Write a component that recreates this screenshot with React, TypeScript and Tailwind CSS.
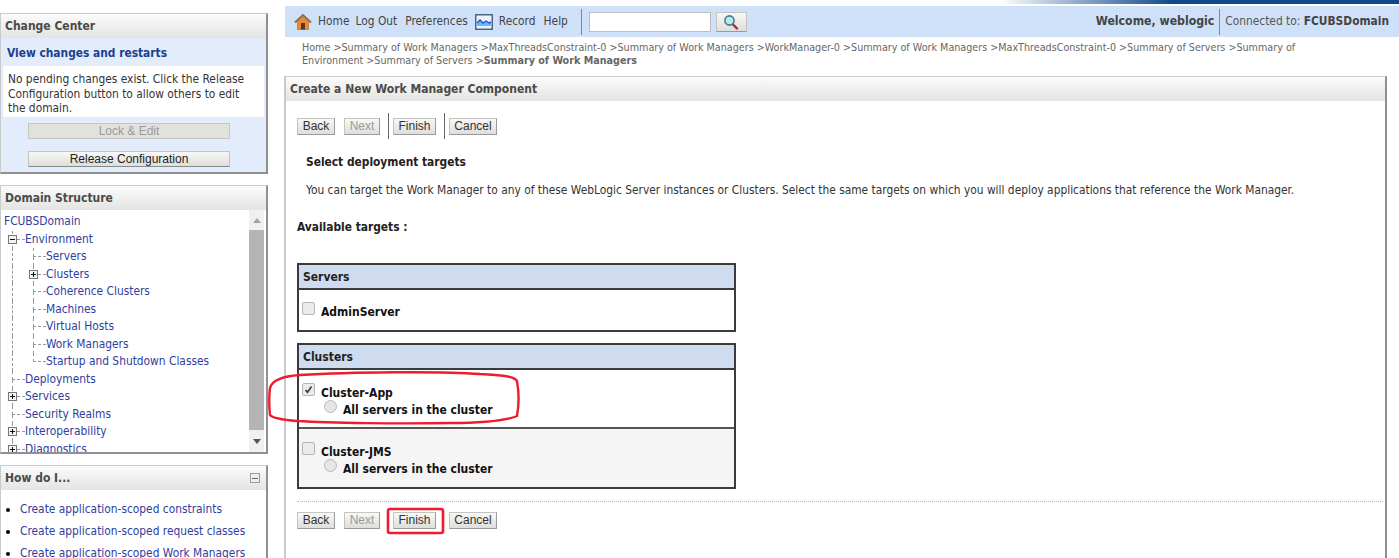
import type { ReactNode } from "react";

const bodyFont = "font-['DejaVu_Sans_Condensed','DejaVu_Sans',sans-serif]";

const treeRows = [
  { label: "Environment", depth: 1, box: "minus" },
  { label: "Servers", depth: 2 },
  { label: "Clusters", depth: 2, box: "plus" },
  { label: "Coherence Clusters", depth: 2 },
  { label: "Machines", depth: 2 },
  { label: "Virtual Hosts", depth: 2 },
  { label: "Work Managers", depth: 2 },
  { label: "Startup and Shutdown Classes", depth: 2, last: true },
  { label: "Deployments", depth: 1 },
  { label: "Services", depth: 1, box: "plus" },
  { label: "Security Realms", depth: 1 },
  { label: "Interoperability", depth: 1, box: "plus" },
  { label: "Diagnostics", depth: 1, box: "plus" },
];

function PanelHeader({ title, children }: { title: string; children?: ReactNode }) {
  return (
    <div className="flex h-6 items-center justify-between bg-gradient-to-b from-[#fbfbfb] to-[#e4e4e2] pl-[4px] pr-[6px] text-[12px] font-bold text-[#4c4a48]">
      {title}
      {children}
    </div>
  );
}

function Panel({ className, children }: { className: string; children: ReactNode }) {
  return (
    <div className={`border border-[#c8cbcc] border-b-2 border-r-2 border-b-[#8f9190] border-r-[#8f9190] ${className}`}>
      {children}
    </div>
  );
}

function TreeBox({ kind }: { kind: string }) {
  return (
    <svg viewBox="0 0 9 9" className="absolute -left-[4px] top-[4px] h-[9px] w-[9px]">
      <rect x="0.5" y="0.5" width="8" height="8" fill="#f4f4f4" stroke="#777" />
      <path d={kind === "plus" ? "M2 4.5h5M4.5 2v5" : "M2 4.5h5"} stroke="#111" />
    </svg>
  );
}

function TreeRow({ label, depth, box, last }: { label: string; depth: number; box?: string; last?: boolean }) {
  return (
    <div className="flex h-[17.5px] pl-[11px]">
      {depth === 2 && <div className="h-full w-[21px] border-l border-dashed border-[#999]" />}
      <div className="relative h-full w-[13px]">
        <div className="h-[9px] border-b border-l border-dashed border-[#999]" />
        {!last && <div className="h-[9px] border-l border-dashed border-[#999]" />}
        {box && <TreeBox kind={box} />}
      </div>
      <span className="leading-[17px] text-[#30409e]">{label}</span>
    </div>
  );
}

function WizardButton({ label, width, disabled }: { label: string; width: string; disabled?: boolean }) {
  return (
    <div
      className={`flex h-[17px] items-center justify-center border border-[#c4c4c0] border-b-[#9a9a96] border-r-[#9a9a96] bg-gradient-to-b from-[#f8f8f6] to-[#dededa] font-['Liberation_Sans',sans-serif] text-[12px] ${width} ${
        disabled ? "text-[#9b9b9b]" : "text-[#333]"
      }`}
    >
      {label}
    </div>
  );
}

function WizardButtons({ separators }: { separators?: boolean }) {
  const sep = `ml-[8px] mr-[4px] h-[26px] w-px ${separators ? "bg-[#666]" : "bg-transparent"}`;
  return (
    <div className="flex h-[30px] items-center">
      <WizardButton label="Back" width="w-[38px]" />
      <div className="w-[9px]" />
      <WizardButton label="Next" width="w-[36px]" disabled />
      <div className={sep} />
      <WizardButton label="Finish" width="w-[43px]" />
      <div className={sep} />
      <WizardButton label="Cancel" width="w-[48px]" />
    </div>
  );
}

function CheckBox({ checked }: { checked?: boolean }) {
  return (
    <div className="flex h-[13px] w-[13px] shrink-0 items-center justify-center rounded-[2px] border border-[#b5b5b5] bg-[#ebebeb]">
      {checked && (
        <svg viewBox="0 0 11 11" className="h-[11px] w-[11px]">
          <path d="M2.5 6l2 2.2L8.5 2.5" fill="none" stroke="#444" strokeWidth="1.8" />
        </svg>
      )}
    </div>
  );
}

function TargetOption({ name, checked, cluster }: { name: string; checked?: boolean; cluster?: boolean }) {
  return (
    <div className="font-bold text-[#111]">
      <div className="flex items-start gap-[6px]">
        <CheckBox checked={checked} />
        <span className="mt-[2px] text-[12px] leading-[16px]">{name}</span>
      </div>
      <div className={cluster ? "mt-px flex items-start gap-[6px] pl-[22px]" : "hidden"}>
        <div className="-mt-[2px] h-[13px] w-[13px] rounded-full border border-[#b9b9b9] bg-[#e6e6e6]" />
        <span className="text-[12px] leading-[16px]">All servers in the cluster</span>
      </div>
    </div>
  );
}

function TargetHeader({ title }: { title: string }) {
  return (
    <div className="flex h-[25px] items-center border-b-2 border-[#3b3b3b] bg-[#cfdcef] pl-[4px] text-[12px] font-bold text-[#222]">
      {title}
    </div>
  );
}

export default function App() {
  return (
    <div className={`relative h-[558px] w-[1399px] overflow-hidden bg-white text-[11.85px] text-[#333] ${bodyFont}`}>
      {/* strip along the top edge */}
      <div className="flex h-[6px] items-start justify-end">
        <div className="h-[4px] w-[399px] bg-gradient-to-r from-white via-[#0d4a8b] via-43% to-[#0d4a8b]" />
      </div>

      <div className="flex">
        {/* left column */}
        <div className="w-[268px] shrink-0 pt-[7px]">
          <Panel className="h-[161px] bg-[#e3ecfa]">
            <PanelHeader title="Change Center" />
            <div className="flex h-[28px] items-center pl-[6px] pt-[3px] font-bold text-[#1d3f8f]">View changes and restarts</div>
            <div className="mx-[2px] h-[51px] bg-white pb-[5px] pl-[5px] pr-[10px] pt-[6px] leading-[14.5px] text-[#333]">
              No pending changes exist. Click the Release Configuration button to allow others to edit the domain.
            </div>
            <div className="mt-[6px] flex justify-center pr-[9px]">
              <div className="flex h-[16px] w-[202px] items-center justify-center border border-[#c6c6c0] bg-[#e2e2dc] font-['Liberation_Sans',sans-serif] text-[12px] text-[#999]">
                Lock &amp; Edit
              </div>
            </div>
            <div className="mt-[12px] flex justify-center pr-[9px]">
              <div className="flex h-[16px] w-[202px] items-center justify-center border border-[#c4c4c0] border-b-[#8a8a88] bg-gradient-to-b from-[#f8f8f6] to-[#dededa] font-['Liberation_Sans',sans-serif] text-[12px] text-[#222]">
                Release Configuration
              </div>
            </div>
          </Panel>

          <Panel className="mt-[11px] h-[269px] bg-white">
            <PanelHeader title="Domain Structure" />
            <div className="flex h-[242px]">
              <div className="h-full flex-1 overflow-hidden pt-[3px]">
                <div className="h-[17.5px] pl-[3px] leading-[17px] text-[#30409e]">FCUBSDomain</div>
                {treeRows.map((row) => (
                  <TreeRow key={row.label} {...row} />
                ))}
              </div>
              <div className="mr-[2px] flex h-full w-[15px] flex-col items-center bg-[#f0f0f0]">
                <div className="flex h-[20px] items-center">
                  <div className="h-0 w-0 border-x-[4px] border-b-[5px] border-x-transparent border-b-[#a3a3a3]" />
                </div>
                <div className="h-[200px] w-full bg-[#b4b4b4]" />
                <div className="flex h-[22px] items-center">
                  <div className="h-0 w-0 border-x-[4px] border-t-[5px] border-x-transparent border-t-[#555]" />
                </div>
              </div>
            </div>
          </Panel>

          <Panel className="mt-[11px] h-[140px] bg-white">
            <PanelHeader title="How do I...">
              <div className="flex h-[10px] w-[10px] items-center justify-center border border-[#9b9b9b] bg-[#eee]">
                <div className="h-px w-[6px] bg-[#666]" />
              </div>
            </PanelHeader>
            <ul className="mt-[12px] flex flex-col gap-[5.5px] pl-[5px]">
              {[
                "Create application-scoped constraints",
                "Create application-scoped request classes",
                "Create application-scoped Work Managers",
              ].map((link) => (
                <li key={link} className="flex h-[16.5px] items-center text-[#30409e]">
                  <span className="mr-[10px] h-[4px] w-[4px] rounded-full bg-black" />
                  {link}
                </li>
              ))}
            </ul>
          </Panel>
        </div>

        <div className="w-[17px] shrink-0" />

        {/* main column */}
        <div className="min-w-0 flex-1">
          <div className="flex h-[31px] items-center bg-[#cfe1f8] pl-[9px] pr-[10px]">
            <svg viewBox="0 0 18 18" className="h-[18px] w-[18px]">
              <path d="M1 9.5L9 2l8 7.5" fill="none" stroke="#8a6a50" strokeWidth="2" />
              <path d="M3.5 9v7.5h11V9L9 4z" fill="#f08a24" stroke="#b8621a" strokeWidth="0.6" />
              <rect x="7" y="10" width="4" height="6.5" fill="#4a3a32" />
            </svg>
            <span className="ml-[6px] text-[#444]">Home</span>
            <span className="ml-[6px] text-[#444]">Log Out</span>
            <span className="ml-[8px] text-[#444]">Preferences</span>
            <svg viewBox="0 0 18 16" className="ml-[7px] h-[16px] w-[18px]">
              <rect x="0.75" y="0.75" width="16.5" height="14.5" fill="#eef2f8" stroke="#4a6585" strokeWidth="1.5" />
              <path d="M2 12V9l3-3 3 3 3-2 3 2 2-1v4z" fill="#62bdf5" />
              <path d="M2 9l3-3 3 3 3-2 3 2 2-1" fill="none" stroke="#2a50d8" strokeWidth="1.4" />
            </svg>
            <span className="ml-[6px] text-[#444]">Record</span>
            <span className="ml-[8px] text-[#444]">Help</span>
            <div className="ml-[13px] h-[26px] w-px bg-[#888]" />
            <div className="ml-[7px] h-[20px] w-[122px] border border-[#bdbdbd] bg-white" />
            <div className="ml-[5px] flex h-[20px] w-[31px] items-center justify-center border border-[#c4c4c0] border-b-[#9a9a96] bg-gradient-to-b from-[#f8f8f6] to-[#dededa]">
              <svg viewBox="0 0 16 16" className="h-[16px] w-[16px]">
                <path d="M9.5 10l4.5 4.5" stroke="#b8242c" strokeWidth="2.4" strokeLinecap="round" />
                <circle cx="6.5" cy="6.5" r="4.6" fill="#bfe6ee" stroke="#3f7f8f" strokeWidth="1.6" />
              </svg>
            </div>
            <div className="flex-1" />
            <span className="text-[12.2px] font-bold text-[#444]">Welcome, weblogic</span>
            <div className="mx-[5px] h-[26px] w-px bg-[#888]" />
            <span className="text-[#555]">Connected to:&nbsp;</span>
            <span className="font-bold text-[#444]">FCUBSDomain</span>
          </div>

          <div className="h-[39px] pl-[17px] pr-[95px] pt-[4px] text-[10.68px] leading-[13px] text-[#666]">
            Home &gt;Summary of Work Managers &gt;MaxThreadsConstraint-0 &gt;Summary of Work Managers &gt;WorkManager-0 &gt;Summary of Work Managers &gt;MaxThreadsConstraint-0 &gt;Summary of Servers &gt;Summary of Environment &gt;Summary of Servers &gt;<b>Summary of Work Managers</b>
          </div>

          <div className="-ml-px mr-[12px] h-[490px] border-l-2 border-r-2 border-t border-[#c8cbcc] border-r-[#8f9190]">
            <PanelHeader title="Create a New Work Manager Component" />
            <div className="pl-[11px] pr-[2px]">
              <div className="mt-[10px]">
                <WizardButtons separators />
              </div>
              <div className="mt-[13px] pl-[9px] font-bold text-[#222]">Select deployment targets</div>
              <div className="mt-[10px] pl-[9px] text-[#333]">
                You can target the Work Manager to any of these WebLogic Server instances or Clusters. Select the same targets on which you will deploy applications that reference the Work Manager.
              </div>
              <div className="mt-[19px] font-bold text-[#222]">Available targets :</div>

              <div className="mt-[27px] w-[439px] border-2 border-[#3b3b3b]">
                <TargetHeader title="Servers" />
                <div className="h-[40px] px-[3px] pt-[12px]">
                  <TargetOption name="AdminServer" />
                </div>
              </div>

              <div className="mt-[11px] w-[439px] border-2 border-[#3b3b3b]">
                <TargetHeader title="Clusters" />
                <div className="h-[59px] border-b-2 border-[#555] px-[3px] pt-[13px]">
                  <TargetOption name="Cluster-App" checked cluster />
                </div>
                <div className="h-[58px] bg-[#f5f5f5] px-[3px] pt-[13px]">
                  <TargetOption name="Cluster-JMS" cluster />
                </div>
              </div>

              <div className="mt-[12px] border-t border-dotted border-[#bbb]" />
              <div className="mt-[3px]">
                <WizardButtons />
              </div>
            </div>
          </div>
        </div>
      </div>

      {/* red annotations drawn over the shot */}
      <svg className="pointer-events-none absolute left-0 top-0 h-[558px] w-[1399px]" viewBox="0 0 1399 558">
        <path
          d="M270 388C272 380 285 376 300 375C350 372 440 371 480 374C500 375 514 376 517 381C519 392 519 405 517 416C505 421 480 423 450 423C400 424 330 423 297 421C285 420 272 418 270 415C269 405 269 396 270 388Z"
          fill="none"
          stroke="#ee1c2e"
          strokeWidth="2.4"
        />
        <rect x="388" y="509" width="55" height="24" rx="2" fill="none" stroke="#ee1c2e" strokeWidth="2.6" />
      </svg>
    </div>
  );
}
